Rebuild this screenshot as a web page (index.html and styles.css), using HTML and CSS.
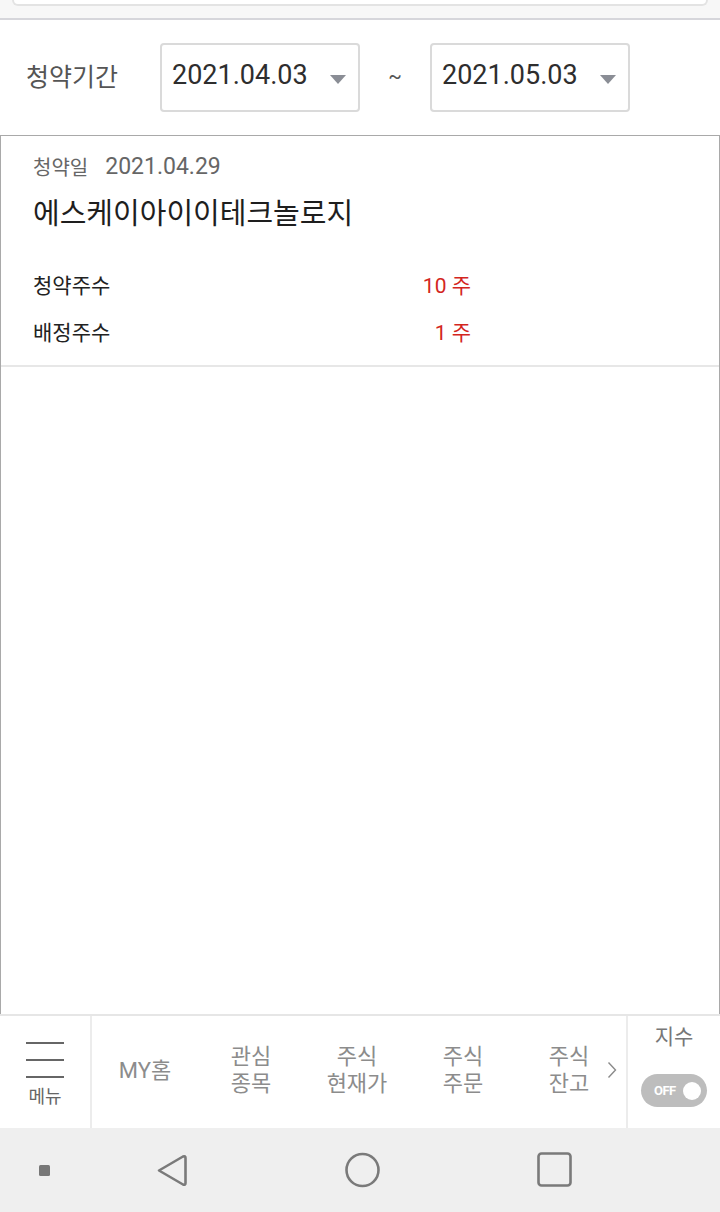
FILE: index.html
```html
<!DOCTYPE html>
<html>
	<head>
		<meta charset="UTF-8">
		<title>청약내역</title>
		<link rel="stylesheet" href="styles.css">
	</head>
	<body>
		<div class="page">
			<div class="header">
				<div class="search"></div>
			</div>
			<div class="filter">
				<span class="filter-label">청약기간</span>
				<div class="select">
					<span>2021.04.03</span>
					<i class="arrow"></i>
				</div>
				<span class="tilde">~</span>
				<div class="select">
					<span>2021.05.03</span>
					<i class="arrow"></i>
				</div>
			</div>
			<div class="card">
				<div class="item">
					<div class="item-date">
						<span class="date-label">청약일</span>
						<span class="date-value">2021.04.29</span>
					</div>
					<div class="item-name">에스케이아이이테크놀로지</div>
					<div class="row first">
						<span>청약주수</span>
						<span class="qty"><b>10</b> 주</span>
					</div>
					<div class="row">
						<span>배정주수</span>
						<span class="qty"><b>1</b> 주</span>
					</div>
				</div>
			</div>
			<div class="tabbar">
				<div class="menu">
					<div class="burger">
						<span></span>
						<span></span>
						<span></span>
					</div>
					<div class="menu-text">메뉴</div>
				</div>
				<div class="tabs">
					<div class="tab">MY홈</div>
					<div class="tab">관심<br>종목</div>
					<div class="tab">주식<br>현재가</div>
					<div class="tab">주식<br>주문</div>
					<div class="tab">주식<br>잔고</div>
					<svg class="more" width="10" height="18" viewBox="0 0 10 18">
						<polyline points="1.5,1.5 8.5,9 1.5,16.5" fill="none" stroke="#8a8a8a" stroke-width="1.4"/>
					</svg>
				</div>
				<div class="index">
					<div class="index-text">지수</div>
					<div class="toggle">
						<span>OFF</span>
						<i class="knob"></i>
					</div>
				</div>
			</div>
			<div class="sysbar">
				<svg width="720" height="84" viewBox="0 0 720 84">
					<rect x="39" y="37" width="11" height="11" rx="1.5" fill="#777"/>
					<path d="M159 42.5 L183 28.5 Q185.5 27.5 185.5 30 L185.5 55 Q185.5 57.5 183 56.5 Z" fill="none" stroke="#7a7a7a" stroke-width="2.6" stroke-linejoin="round"/>
					<circle cx="362.5" cy="42" r="16" fill="none" stroke="#7a7a7a" stroke-width="2.6"/>
					<rect x="538.5" y="25.5" width="32" height="32" rx="3" fill="none" stroke="#7a7a7a" stroke-width="2.6"/>
				</svg>
			</div>
		</div>
	</body>
</html>
```

FILE: styles.css
```css
body{
	margin: 0;
	font-family: Roboto, "Noto Sans CJK KR", sans-serif;
	background: #fff;
}
.page{
	width: 720px;
	height: 1212px;
	display: flex;
	flex-direction: column;
	overflow: hidden;
}
.header{
	height: 18px;
	background: #f7f7f7;
	border-bottom: 2px solid #d6d6db;
	padding: 0 12px;
}
.search{
	height: 4px;
	background: #fff;
	border: 2px solid #e3e3e3;
	border-top: none;
	border-radius: 0 0 10px 10px;
}
.filter{
	height: 115px;
	display: flex;
	align-items: center;
	padding-left: 26px;
}
.filter-label{
	width: 134px;
	font-size: 25px;
	color: #555;
	margin-bottom: 5px;
}
.select{
	box-sizing: border-box;
	width: 200px;
	height: 69px;
	border: 2px solid #dadada;
	border-radius: 4px;
	display: flex;
	align-items: center;
	justify-content: space-between;
	padding: 0 12px 0 10px;
	font-size: 27px;
	color: #2e2e2e;
}
.select span{
	margin-bottom: 5px;
}
.arrow{
	width: 0;
	height: 0;
	border-left: 8.5px solid transparent;
	border-right: 8.5px solid transparent;
	border-top: 9px solid #8a8d95;
	margin-top: 3px;
}
.tilde{
	width: 70px;
	text-align: center;
	font-size: 20px;
	color: #555;
	margin-bottom: 4px;
}
.card{
	flex: 1;
	border: 1px solid #a9a9a9;
	border-bottom: none;
}
.item{
	padding: 15px 0 11px 32px;
	border-bottom: 2px solid #e7e7e7;
}
.item-date{
	height: 30px;
	display: flex;
	align-items: center;
	color: #666;
}
.date-label{
	font-size: 20px;
	margin-right: 17px;
}
.date-value{
	font-size: 23px;
}
.item-name{
	margin-top: 15px;
	height: 36px;
	line-height: 36px;
	font-size: 29px;
	color: #1e1e1e;
}
.row{
	width: 438px;
	height: 47px;
	display: flex;
	align-items: center;
	justify-content: space-between;
	font-size: 21px;
	color: #222;
}
.row.first{
	margin-top: 28px;
}
.qty{
	color: #d3261e;
}
.qty b{
	font-weight: normal;
	font-size: 21px;
}
.tabbar{
	height: 112px;
	border-top: 2px solid #e6e6e6;
	display: flex;
}
.menu{
	width: 92px;
	border-right: 2px solid #ececec;
	display: flex;
	flex-direction: column;
	align-items: center;
	padding-top: 26px;
	box-sizing: border-box;
}
.burger span{
	display: block;
	width: 38px;
	height: 2px;
	background: #666;
	margin-bottom: 15px;
}
.burger span:last-child{
	margin-bottom: 0;
}
.menu-text{
	margin-top: 7px;
	font-size: 18px;
	line-height: 24px;
	color: #666;
}
.tabs{
	flex: 1;
	display: flex;
	align-items: center;
	position: relative;
	border-right: 2px solid #ececec;
}
.tab{
	width: 106px;
	text-align: center;
	font-size: 22px;
	line-height: 27px;
	color: #8c8c8c;
	margin-top: -4px;
}
.more{
	position: absolute;
	left: 515px;
	top: 45px;
}
.index{
	width: 92px;
	display: flex;
	flex-direction: column;
	align-items: center;
	padding-top: 8px;
}
.index-text{
	font-size: 21px;
	line-height: 26px;
	color: #777;
}
.toggle{
	margin-top: 24px;
	width: 66px;
	height: 33px;
	border-radius: 17px;
	background: #bdbdbd;
	display: flex;
	align-items: center;
	justify-content: space-between;
	padding: 0 6px 0 13px;
	box-sizing: border-box;
}
.toggle span{
	font-size: 13px;
	font-weight: bold;
	color: #fff;
	letter-spacing: -0.5px;
}
.knob{
	width: 18px;
	height: 18px;
	border-radius: 50%;
	background: #fff;
}
.sysbar{
	height: 84px;
	background: #efefef;
}
.sysbar svg{
	display: block;
}
```
